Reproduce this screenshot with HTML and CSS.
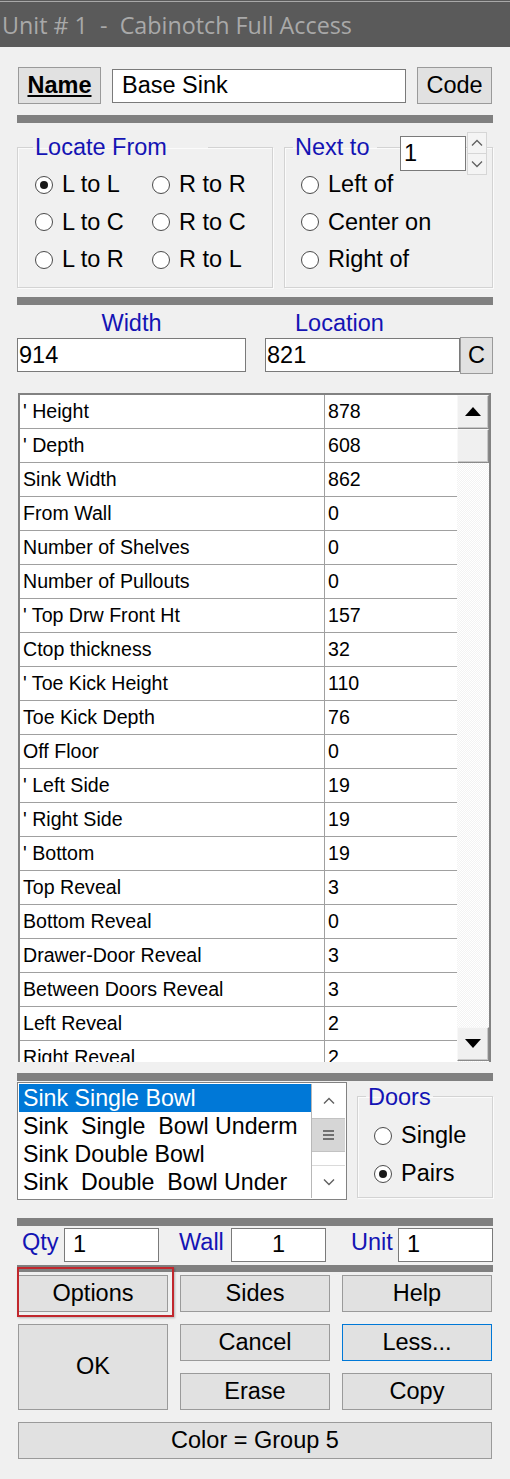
FILE: index.html
```html
<!DOCTYPE html>
<html>
<head>
<meta charset="utf-8">
<title>Unit # 1 - Cabinotch Full Access</title>
<link rel="stylesheet" href="styles.css">
</head>
<body>
<div class="title">Unit # 1  -  Cabinotch Full Access</div>
<main class="dlg">
  <div class="name-row">
    <button class="btn name-btn"><u>Name</u></button>
    <div class="field name-field">Base Sink</div>
    <button class="btn code-btn">Code</button>
  </div>

  <div class="sep sep-a"></div>

  <div class="groups">
    <fieldset class="grp locate">
      <legend>Locate From</legend>
      <div class="radio-grid">
        <label class="radio on"><span class="dot"></span>L to L</label>
        <label class="radio"><span class="dot"></span>R to R</label>
        <label class="radio"><span class="dot"></span>L to C</label>
        <label class="radio"><span class="dot"></span>R to C</label>
        <label class="radio"><span class="dot"></span>L to R</label>
        <label class="radio"><span class="dot"></span>R to L</label>
      </div>
    </fieldset>
    <fieldset class="grp next">
      <legend>Next to</legend>
      <div class="radio-col">
        <label class="radio"><span class="dot"></span>Left of</label>
        <label class="radio"><span class="dot"></span>Center on</label>
        <label class="radio"><span class="dot"></span>Right of</label>
      </div>
    </fieldset>
    <div class="spin">
      <div class="field spin-field">1</div>
      <div class="spin-btns">
        <div class="spin-btn"><svg width="12" height="8" viewBox="0 0 12 8"><polyline points="1,6.5 6,1.5 11,6.5" fill="none" stroke="#606060" stroke-width="1.3"/></svg></div>
        <div class="spin-btn"><svg width="12" height="8" viewBox="0 0 12 8"><polyline points="1,1.5 6,6.5 11,1.5" fill="none" stroke="#606060" stroke-width="1.3"/></svg></div>
      </div>
    </div>
  </div>

  <div class="sep sep-b"></div>

  <div class="wl-labels">
    <div class="blue wl-w">Width</div>
    <div class="blue wl-l">Location</div>
  </div>
  <div class="wl-inputs">
    <div class="field wl-field">914</div>
    <div class="loc">
      <div class="field wl-field loc-field">821</div>
      <button class="btn c-btn">C</button>
    </div>
  </div>

  <div class="table">
    <div class="rows">
      <div class="row"><div class="k">' Height</div><div class="v">878</div></div>
      <div class="row"><div class="k">' Depth</div><div class="v">608</div></div>
      <div class="row"><div class="k">Sink Width</div><div class="v">862</div></div>
      <div class="row"><div class="k">From Wall</div><div class="v">0</div></div>
      <div class="row"><div class="k">Number of Shelves</div><div class="v">0</div></div>
      <div class="row"><div class="k">Number of Pullouts</div><div class="v">0</div></div>
      <div class="row"><div class="k">' Top Drw Front Ht</div><div class="v">157</div></div>
      <div class="row"><div class="k">Ctop thickness</div><div class="v">32</div></div>
      <div class="row"><div class="k">' Toe Kick Height</div><div class="v">110</div></div>
      <div class="row"><div class="k">Toe Kick Depth</div><div class="v">76</div></div>
      <div class="row"><div class="k">Off Floor</div><div class="v">0</div></div>
      <div class="row"><div class="k">' Left Side</div><div class="v">19</div></div>
      <div class="row"><div class="k">' Right Side</div><div class="v">19</div></div>
      <div class="row"><div class="k">' Bottom</div><div class="v">19</div></div>
      <div class="row"><div class="k">Top Reveal</div><div class="v">3</div></div>
      <div class="row"><div class="k">Bottom Reveal</div><div class="v">0</div></div>
      <div class="row"><div class="k">Drawer-Door Reveal</div><div class="v">3</div></div>
      <div class="row"><div class="k">Between Doors Reveal</div><div class="v">3</div></div>
      <div class="row"><div class="k">Left Reveal</div><div class="v">2</div></div>
      <div class="row"><div class="k">Right Reveal</div><div class="v">2</div></div>
    </div>
    <div class="vs">
      <div class="vs-btn"><svg width="16" height="9" viewBox="0 0 16 9"><polygon points="0,9 8,0 16,9" fill="#000"/></svg></div>
      <div class="vs-btn"></div>
      <div class="vs-track"></div>
      <div class="vs-btn"><svg width="16" height="9" viewBox="0 0 16 9"><polygon points="0,0 16,0 8,9" fill="#000"/></svg></div>
    </div>
  </div>

  <div class="sep sep-c"></div>

  <div class="list-row">
    <div class="listbox">
      <div class="items">
        <div class="item sel">Sink Single Bowl</div>
        <div class="item">Sink  Single  Bowl Underm</div>
        <div class="item">Sink Double Bowl</div>
        <div class="item">Sink  Double  Bowl Under</div>
      </div>
      <div class="ls">
        <div class="ls-arrow"><svg width="12" height="8" viewBox="0 0 12 8"><polyline points="1,6.5 6,1.5 11,6.5" fill="none" stroke="#606060" stroke-width="1.4"/></svg></div>
        <div class="ls-thumb"><svg width="11" height="10" viewBox="0 0 11 10"><rect x="0" y="0" width="11" height="2" fill="#707070"/><rect x="0" y="4" width="11" height="2" fill="#707070"/><rect x="0" y="8" width="11" height="2" fill="#707070"/></svg></div>
        <div class="ls-gap"></div>
        <div class="ls-arrow ls-down"><svg width="12" height="8" viewBox="0 0 12 8"><polyline points="1,1.5 6,6.5 11,1.5" fill="none" stroke="#606060" stroke-width="1.4"/></svg></div>
      </div>
    </div>
    <fieldset class="grp doors">
      <legend>Doors</legend>
      <label class="radio"><span class="dot"></span>Single</label>
      <label class="radio on"><span class="dot"></span>Pairs</label>
    </fieldset>
  </div>

  <div class="sep sep-d"></div>

  <div class="qty-row">
    <span class="blue ql ql1">Qty</span>
    <div class="field qf qf-left">1</div>
    <span class="blue ql ql2">Wall</span>
    <div class="field qf qf-center">1</div>
    <span class="blue ql ql3">Unit</span>
    <div class="field qf qf-left">1</div>
  </div>

  <div class="sep sep-e"></div>

  <div class="buttons">
    <button class="btn">Options</button>
    <button class="btn">Sides</button>
    <button class="btn">Help</button>
    <button class="btn ok">OK</button>
    <button class="btn">Cancel</button>
    <button class="btn focus">Less...</button>
    <button class="btn">Erase</button>
    <button class="btn">Copy</button>
    <button class="btn wide">Color = Group 5</button>
    <div class="mark"></div>
  </div>
</main>
</body>
</html>
```

FILE: styles.css
```css
* { box-sizing: border-box; }

html, body { margin: 0; padding: 0; }

body {
  width: 510px;
  height: 1479px;
  overflow: hidden;
  background: #f0f0f0;
  color: #000;
  font-family: "Liberation Sans", Arial, sans-serif;
  font-size: 23.5px;
}

.title {
  height: 47px;
  padding-left: 2px;
  background: linear-gradient(#5a5a5a 0 1px, #a8a8a8 1px 2px, #5a5a5a 2px);
  color: #a9a9a9;
  font-family: "Open Sans", "Noto Sans", sans-serif;
  font-size: 23.3px;
  line-height: 50px;
  white-space: pre;
}

.dlg { padding: 20px 17px 0; }

.blue { color: #1414b4; }

.btn {
  display: flex;
  align-items: center;
  justify-content: center;
  padding: 0;
  margin: 0;
  background: #e1e1e1;
  border: 1px solid #9a9a9a;
  color: #000;
  font: inherit;
}

.field {
  background: #fff;
  border: 1px solid #7a7a7a;
  display: flex;
  align-items: center;
  white-space: pre;
}

.sep { height: 8px; background: #808080; }

/* name row */
.name-row { display: flex; align-items: center; height: 37px; padding-left: 1px; }
.name-btn { width: 83px; height: 37px; font-weight: bold; }
.name-field { width: 294px; height: 34px; margin-left: 11px; padding-left: 9px; }
.code-btn { width: 75px; height: 37px; margin-left: 11px; }

.sep-a { margin-top: 11px; }

/* groups */
.groups { position: relative; display: flex; gap: 11px; margin-top: 10px; }

.grp {
  margin: 0;
  min-inline-size: 0;
  border: 1px solid #d3d3d3;
  box-shadow: inset 1px 1px 0 #fbfbfb, 1px 1px 0 #fbfbfb;
}

.grp legend {
  color: #1414b4;
  line-height: 28px;
  padding: 0 0 0 2px;
}

.locate { width: 256px; padding: 5px 0 8px 17px; }
.locate legend { width: 175px; margin-left: -2px; }
.next { width: 209px; padding: 5px 0 8px 16px; }
.next legend { width: 84px; margin-left: -8px; }

.radio { display: flex; align-items: center; gap: 9px; white-space: nowrap; }

.dot {
  position: relative;
  flex: none;
  width: 18px;
  height: 18px;
  border: 1px solid #4a4a4a;
  border-radius: 50%;
  background: #fff;
}
.on .dot::after {
  content: "";
  position: absolute;
  inset: 4px;
  border-radius: 50%;
  background: #1a1a1a;
}

.radio-grid { display: grid; grid-template-columns: 117px auto; grid-auto-rows: 37.5px; }
.radio-col { display: grid; grid-auto-rows: 37.5px; }

.spin { position: absolute; left: 383px; top: -1px; display: flex; align-items: center; }
.spin-field { width: 66px; height: 35px; padding-left: 3px; }
.spin-btns { display: flex; flex-direction: column; margin-left: 1px; }
.spin-btn {
  width: 20px;
  height: 21.5px;
  display: flex;
  align-items: center;
  justify-content: center;
  border: 1px solid #d6d6d6;
  background: #f4f4f4;
}
.spin-btn + .spin-btn { border-top: 0; }

.sep-b { margin-top: 9px; }

/* width / location */
.wl-labels { display: grid; grid-template-columns: 229px 228px; column-gap: 19px; margin-top: 5px; line-height: 27px; }
.wl-w { text-align: center; }
.wl-l { padding-left: 30px; }

.wl-inputs { display: grid; grid-template-columns: 229px 228px; column-gap: 19px; align-items: center; height: 37px; }
.wl-field { height: 34px; padding-left: 1px; }
.loc { display: flex; align-items: center; }
.loc-field { width: 195px; }
.c-btn { width: 33px; height: 37px; }

/* property grid */
.table {
  display: flex;
  height: 669px;
  margin: 19px 2px 0 1px;
  border: 2px solid #828282;
  border-bottom: 0;
  background: #fff;
  font-size: 19.6px;
}
.rows { flex: 1; overflow: hidden; }
.row { display: flex; height: 34px; border-bottom: 1px solid #a0a0a0; line-height: 33px; }
.k { width: 305px; padding-left: 3px; border-right: 1px solid #a0a0a0; white-space: pre; }
.v { flex: 1; padding-left: 3px; }

.vs {
  width: 32px;
  display: flex;
  flex-direction: column;
  padding-bottom: 1px;
  background: repeating-conic-gradient(#f3f3f3 0 25%, #fff 0 50%) 0 0 / 2px 2px;
}
.vs-btn {
  height: 34px;
  flex: none;
  display: flex;
  align-items: center;
  justify-content: center;
  background: #f0f0f0;
  border: 1px solid;
  border-color: #f8f8f8 #8a8a8a #8a8a8a #f8f8f8;
  box-shadow: inset -1px -1px 0 #c8c8c8;
}
.vs-track { flex: 1; }

.sep-c { margin-top: 11px; }

/* list + doors */
.list-row { display: flex; align-items: flex-start; margin-top: 1px; }
.listbox {
  display: flex;
  width: 330px;
  height: 118px;
  border: 1px solid #828282;
  background: #fff;
  padding: 1px;
}
.items { flex: 1; }
.item { height: 28px; line-height: 28px; padding-left: 4px; white-space: pre; font-size: 23.2px; }
.item.sel { background: #0078d7; color: #fff; }

.ls { width: 34px; display: flex; flex-direction: column; border-left: 1px solid #b8b8b8; }
.ls-arrow { height: 34px; display: flex; align-items: center; justify-content: center; }
.ls-thumb {
  height: 34px;
  display: flex;
  align-items: center;
  justify-content: center;
  background: #d6d6d6;
  border-top: 1px solid #c2c2c2;
  border-bottom: 1px solid #c2c2c2;
}
.ls-gap { height: 13px; }
.ls-down { height: 33px; border-top: 1px solid #dadada; }

.doors { width: 136px; margin-left: 10px; margin-top: 1px; padding: 6px 0 4px 16px; }
.doors legend { margin-left: -8px; padding: 0 2px; }
.doors .radio { height: 38px; }

.sep-d { margin-top: 18px; }

/* qty row */
.qty-row { display: flex; align-items: center; height: 34px; margin-top: 2px; }
.ql { padding-bottom: 4px; }
.ql1 { width: 47px; padding-left: 5px; }
.ql2 { width: 72px; padding-left: 20px; }
.ql3 { width: 72px; padding-left: 25px; }
.qf { width: 95px; height: 34px; }
.qf-left { padding-left: 8px; }
.qf-center { justify-content: center; }

.sep-e { margin-top: 3px; height: 7px; }

/* buttons */
.buttons {
  position: relative;
  display: grid;
  grid-template-columns: 150px 150px 150px;
  grid-template-rows: 37px 37px 37px 37px;
  gap: 12px;
  margin: 3px 0 0 1px;
}
.ok { grid-row: 2 / span 2; }
.focus { border-color: #0078d7; }
.wide { grid-column: 1 / span 3; }

.mark {
  position: absolute;
  left: -1px;
  top: -8px;
  width: 157px;
  height: 50px;
  border: 2px solid #c1272d;
  box-shadow: 1px 1px 2px rgba(0, 0, 0, 0.25);
  pointer-events: none;
}
```
